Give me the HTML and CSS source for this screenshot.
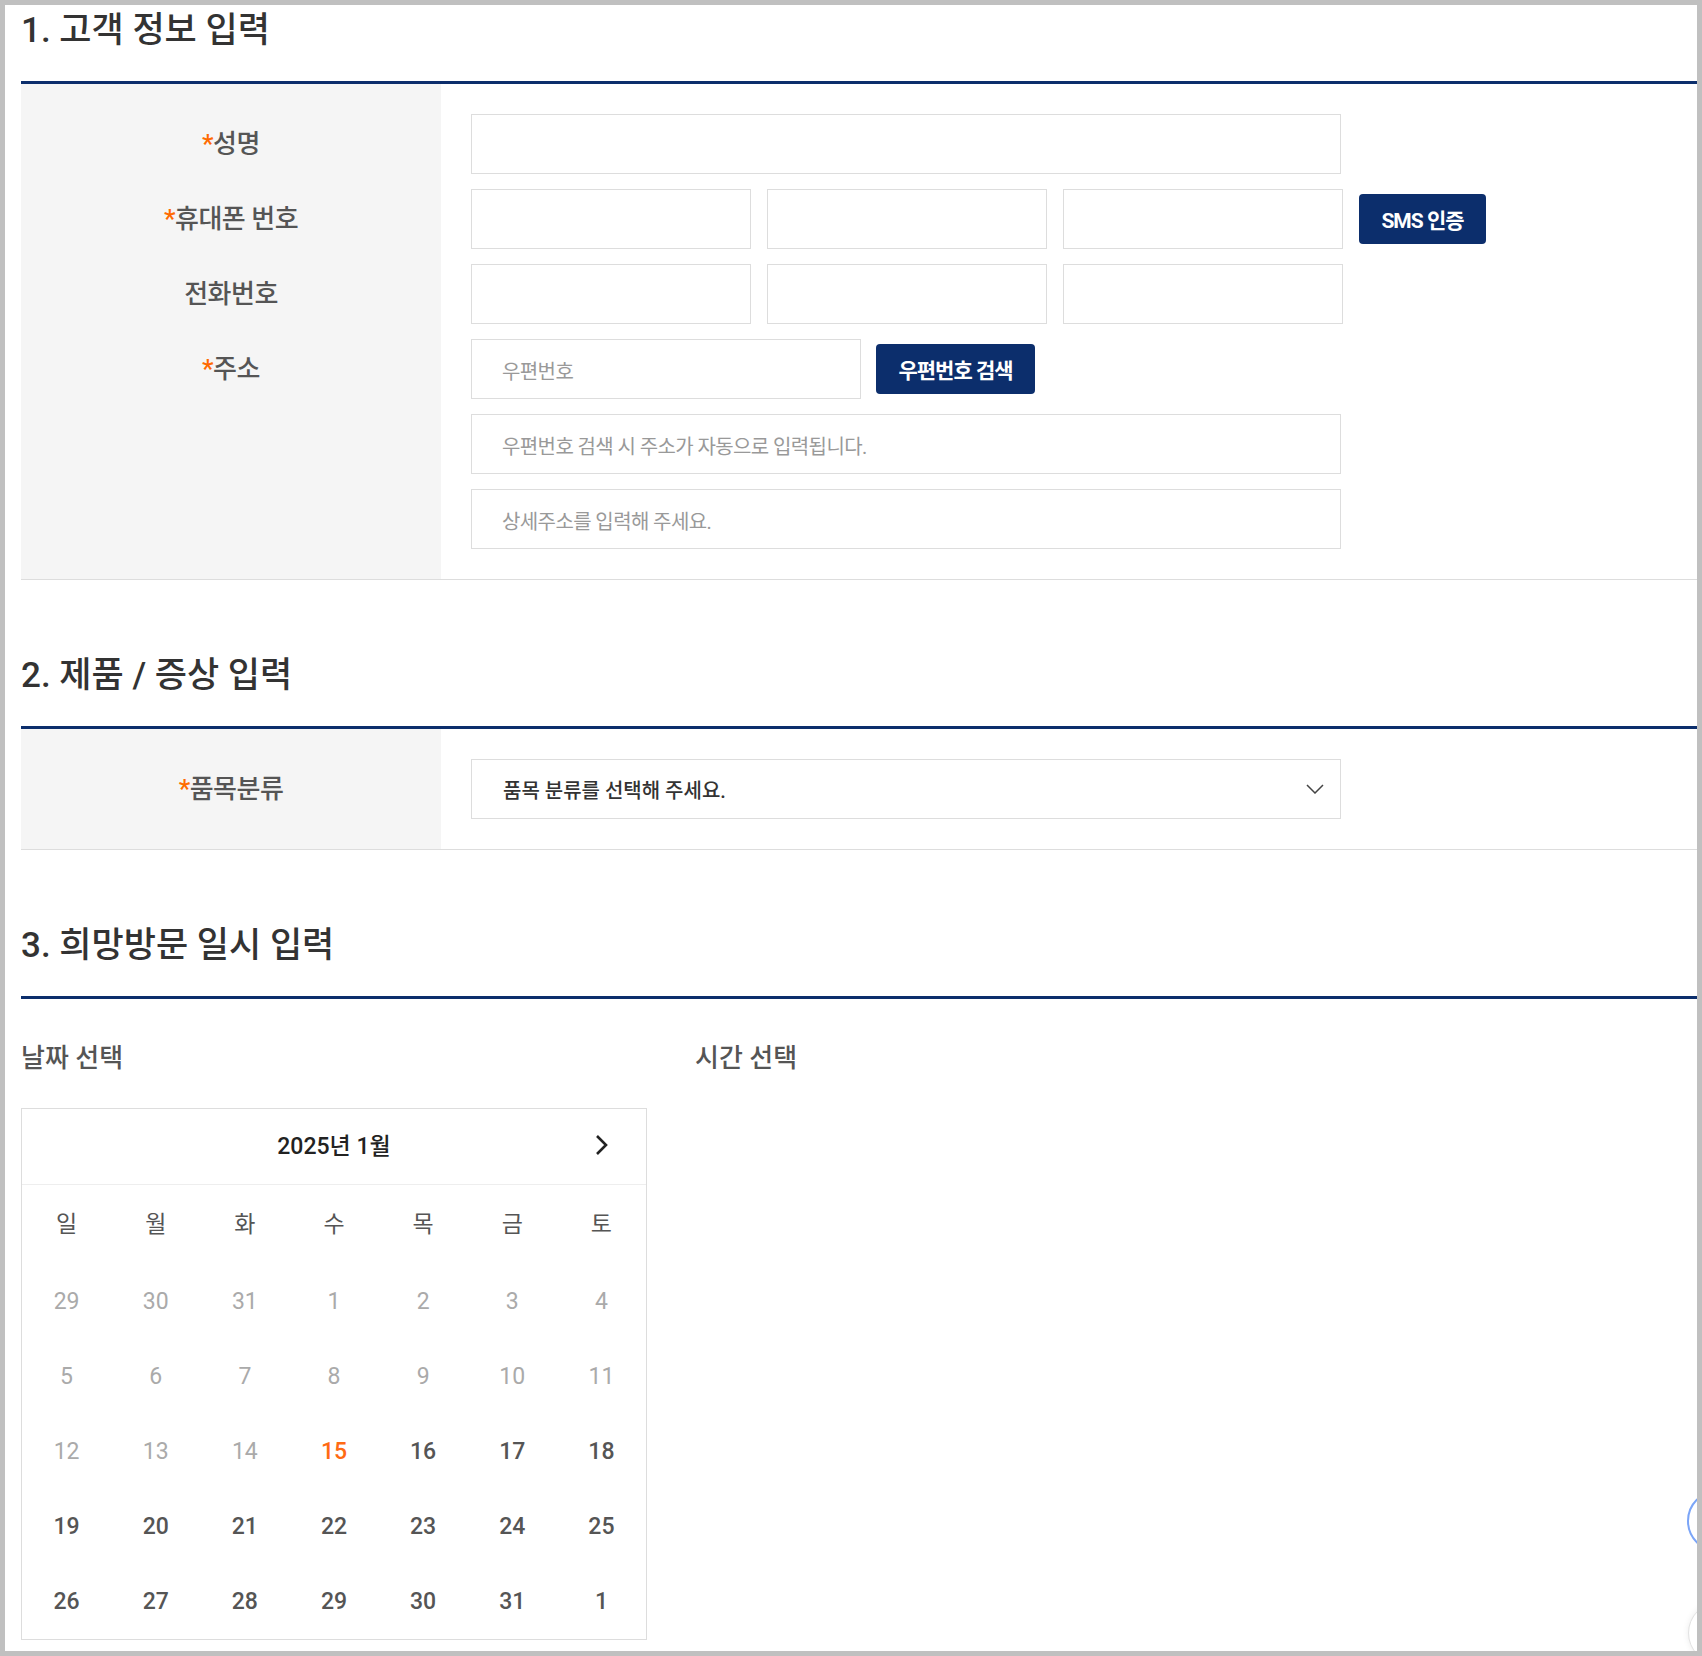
FILE: index.html
```html
<!DOCTYPE html>
<html lang="ko">
<head>
  <meta charset="UTF-8">
  <meta name="viewport" content="width=device-width, initial-scale=1.0">
  <title>서비스 접수</title>
  <link rel="stylesheet" href="styles.css">
</head>
<body>
  <div class="page">
    <section class="sec">
      <h2 class="sec-title">1. 고객 정보 입력</h2>
      <table class="form-table">
        <tr>
          <th><span class="req">*</span>성명</th>
          <td><input type="text" class="inp inp-full"></td>
        </tr>
        <tr>
          <th><span class="req">*</span>휴대폰 번호</th>
          <td>
            <div class="line">
              <input type="text" class="inp inp-third">
              <input type="text" class="inp inp-third">
              <input type="text" class="inp inp-third">
              <button type="button" class="btn btn-sms">SMS 인증</button>
            </div>
          </td>
        </tr>
        <tr>
          <th>전화번호</th>
          <td>
            <div class="line">
              <input type="text" class="inp inp-third">
              <input type="text" class="inp inp-third">
              <input type="text" class="inp inp-third">
            </div>
          </td>
        </tr>
        <tr>
          <th><span class="req">*</span>주소</th>
          <td>
            <div class="line">
              <input type="text" class="inp inp-zip" placeholder="우편번호">
              <button type="button" class="btn btn-zip">우편번호 검색</button>
            </div>
            <div class="line">
              <input type="text" class="inp inp-full" placeholder="우편번호 검색 시 주소가 자동으로 입력됩니다.">
            </div>
            <div class="line">
              <input type="text" class="inp inp-full" placeholder="상세주소를 입력해 주세요.">
            </div>
          </td>
        </tr>
      </table>
    </section>

    <section class="sec">
      <h2 class="sec-title">2. 제품 / 증상 입력</h2>
      <table class="form-table">
        <tr>
          <th><span class="req">*</span>품목분류</th>
          <td>
            <div class="select">
              <span>품목 분류를 선택해 주세요.</span>
              <svg width="18" height="10" viewBox="0 0 18 10"><path d="M1 1l8 8 8-8" fill="none" stroke="#444" stroke-width="1.5"/></svg>
            </div>
          </td>
        </tr>
      </table>
    </section>

    <section class="sec">
      <h2 class="sec-title">3. 희망방문 일시 입력</h2>
      <div class="visit">
        <div class="visit-date">
          <h3 class="pick-title">날짜 선택</h3>
          <div class="cal">
            <div class="cal-head">
              <span>2025년 1월</span>
              <svg class="cal-next" width="16" height="22" viewBox="0 0 16 22"><path d="M3 2l9 9-9 9" fill="none" stroke="#222" stroke-width="2.6"/></svg>
            </div>
            <div class="cal-grid">
              <div class="wd">일</div><div class="wd">월</div><div class="wd">화</div><div class="wd">수</div><div class="wd">목</div><div class="wd">금</div><div class="wd">토</div>
              <div class="day off">29</div><div class="day off">30</div><div class="day off">31</div><div class="day off">1</div><div class="day off">2</div><div class="day off">3</div><div class="day off">4</div>
              <div class="day off">5</div><div class="day off">6</div><div class="day off">7</div><div class="day off">8</div><div class="day off">9</div><div class="day off">10</div><div class="day off">11</div>
              <div class="day off">12</div><div class="day off">13</div><div class="day off">14</div><div class="day today">15</div><div class="day">16</div><div class="day">17</div><div class="day">18</div>
              <div class="day">19</div><div class="day">20</div><div class="day">21</div><div class="day">22</div><div class="day">23</div><div class="day">24</div><div class="day">25</div>
              <div class="day">26</div><div class="day">27</div><div class="day">28</div><div class="day">29</div><div class="day">30</div><div class="day">31</div><div class="day">1</div>
            </div>
          </div>
        </div>
        <div class="visit-time">
          <h3 class="pick-title">시간 선택</h3>
        </div>
      </div>
    </section>

    <!-- 우측 플로팅 버튼 -->
    <div class="float-btn float-blue"></div>
    <div class="float-btn float-gray"></div>
  </div>
</body>
</html>
```

FILE: styles.css
```css
body {
  margin: 0;
  padding: 5px;
  background-color: #c0c0c0;
  font-family: "Roboto", "Noto Sans CJK KR", sans-serif;
  color: #333;
}
.page {
  position: relative;
  height: 1646px;
  overflow: hidden;
  background-color: #fff;
  padding-left: 16px;
}
.sec + .sec {
  margin-top: 70px;
}
.sec-title {
  margin: 0;
  height: 76px;
  line-height: 52px;
  font-size: 35px;
  font-weight: 500;
  letter-spacing: 0;
  color: #333;
  border-bottom: 3px solid #0c2e6c;
}
.form-table {
  width: 100%;
  border-collapse: collapse;
  border-bottom: 1px solid #ddd;
}
.form-table th {
  width: 420px;
  padding: 7px 0 8px;
  background-color: #f5f5f5;
  vertical-align: top;
  text-align: center;
  font-size: 26px;
  font-weight: 500;
  line-height: 60px;
  letter-spacing: -0.5px;
  color: #555;
}
.form-table td {
  padding: 7px 0 8px 30px;
  vertical-align: top;
}
.form-table tr:first-child th,
.form-table tr:first-child td {
  padding-top: 30px;
}
.form-table tr:last-child th,
.form-table tr:last-child td {
  padding-bottom: 30px;
}
.req {
  color: #ff6a00;
}
.line {
  display: flex;
  align-items: center;
  gap: 16px;
}
.line + .line {
  margin-top: 15px;
}
.inp {
  box-sizing: border-box;
  height: 60px;
  padding: 5px 30px 0;
  border: 1px solid #ddd;
  border-radius: 0;
  font-family: inherit;
  font-size: 20px;
  letter-spacing: -0.6px;
  color: #333;
  outline: none;
}
.inp::placeholder {
  color: #999;
}
.inp-full {
  width: 870px;
}
.inp-third {
  width: 280px;
}
.inp-zip {
  width: 390px;
}
.btn {
  height: 50px;
  padding: 0;
  border: none;
  border-radius: 4px;
  background-color: #0c2e6c;
  color: #fff;
  font-family: inherit;
  font-size: 21px;
  font-weight: 700;
  letter-spacing: -1px;
  cursor: pointer;
}
.btn-sms {
  width: 127px;
}
.btn-zip {
  width: 159px;
  margin-left: -1px;
}
.select {
  box-sizing: border-box;
  width: 870px;
  height: 60px;
  padding: 0 16px 0 31px;
  border: 1px solid #ddd;
  display: flex;
  align-items: center;
  justify-content: space-between;
  font-size: 20px;
  font-weight: 500;
  letter-spacing: 0;
  color: #333;
}
.visit {
  display: flex;
  gap: 48px;
}
.visit-date {
  width: 626px;
}
.pick-title {
  margin: 41px 0 32px;
  line-height: 36px;
  font-size: 26px;
  font-weight: 500;
  letter-spacing: 0;
  color: #555;
}
.cal {
  box-sizing: border-box;
  width: 626px;
  border: 1px solid #ddd;
}
.cal-head {
  position: relative;
  box-sizing: border-box;
  height: 76px;
  padding-bottom: 6px;
  border-bottom: 1px solid #eee;
  display: flex;
  align-items: center;
  justify-content: center;
  font-size: 23px;
  font-weight: 500;
  color: #222;
}
.cal-next {
  position: absolute;
  right: 36px;
  top: 25px;
}
.cal-grid {
  display: grid;
  grid-template-columns: repeat(7, 1fr);
  grid-template-rows: 79px repeat(5, 75px);
}
.cal-grid > div {
  display: flex;
  align-items: center;
  justify-content: center;
  font-size: 23px;
}
.cal-grid > .wd {
  padding-bottom: 6px;
  color: #555;
}
.day {
  color: #555;
  font-weight: 500;
}
.day.off {
  color: #aaa;
  font-weight: 400;
}
.day.today {
  color: #ff6a13;
}
.float-btn {
  position: absolute;
  width: 62px;
  height: 62px;
  border-radius: 50%;
  box-sizing: border-box;
  background-color: #fff;
}
.float-blue {
  left: 1682px;
  top: 1485px;
  border: 2px solid #7ba5f7;
}
.float-gray {
  left: 1683px;
  top: 1597px;
  border: 1px solid #e2e2e2;
  box-shadow: 0 0 6px rgba(0, 0, 0, 0.08);
}
```
